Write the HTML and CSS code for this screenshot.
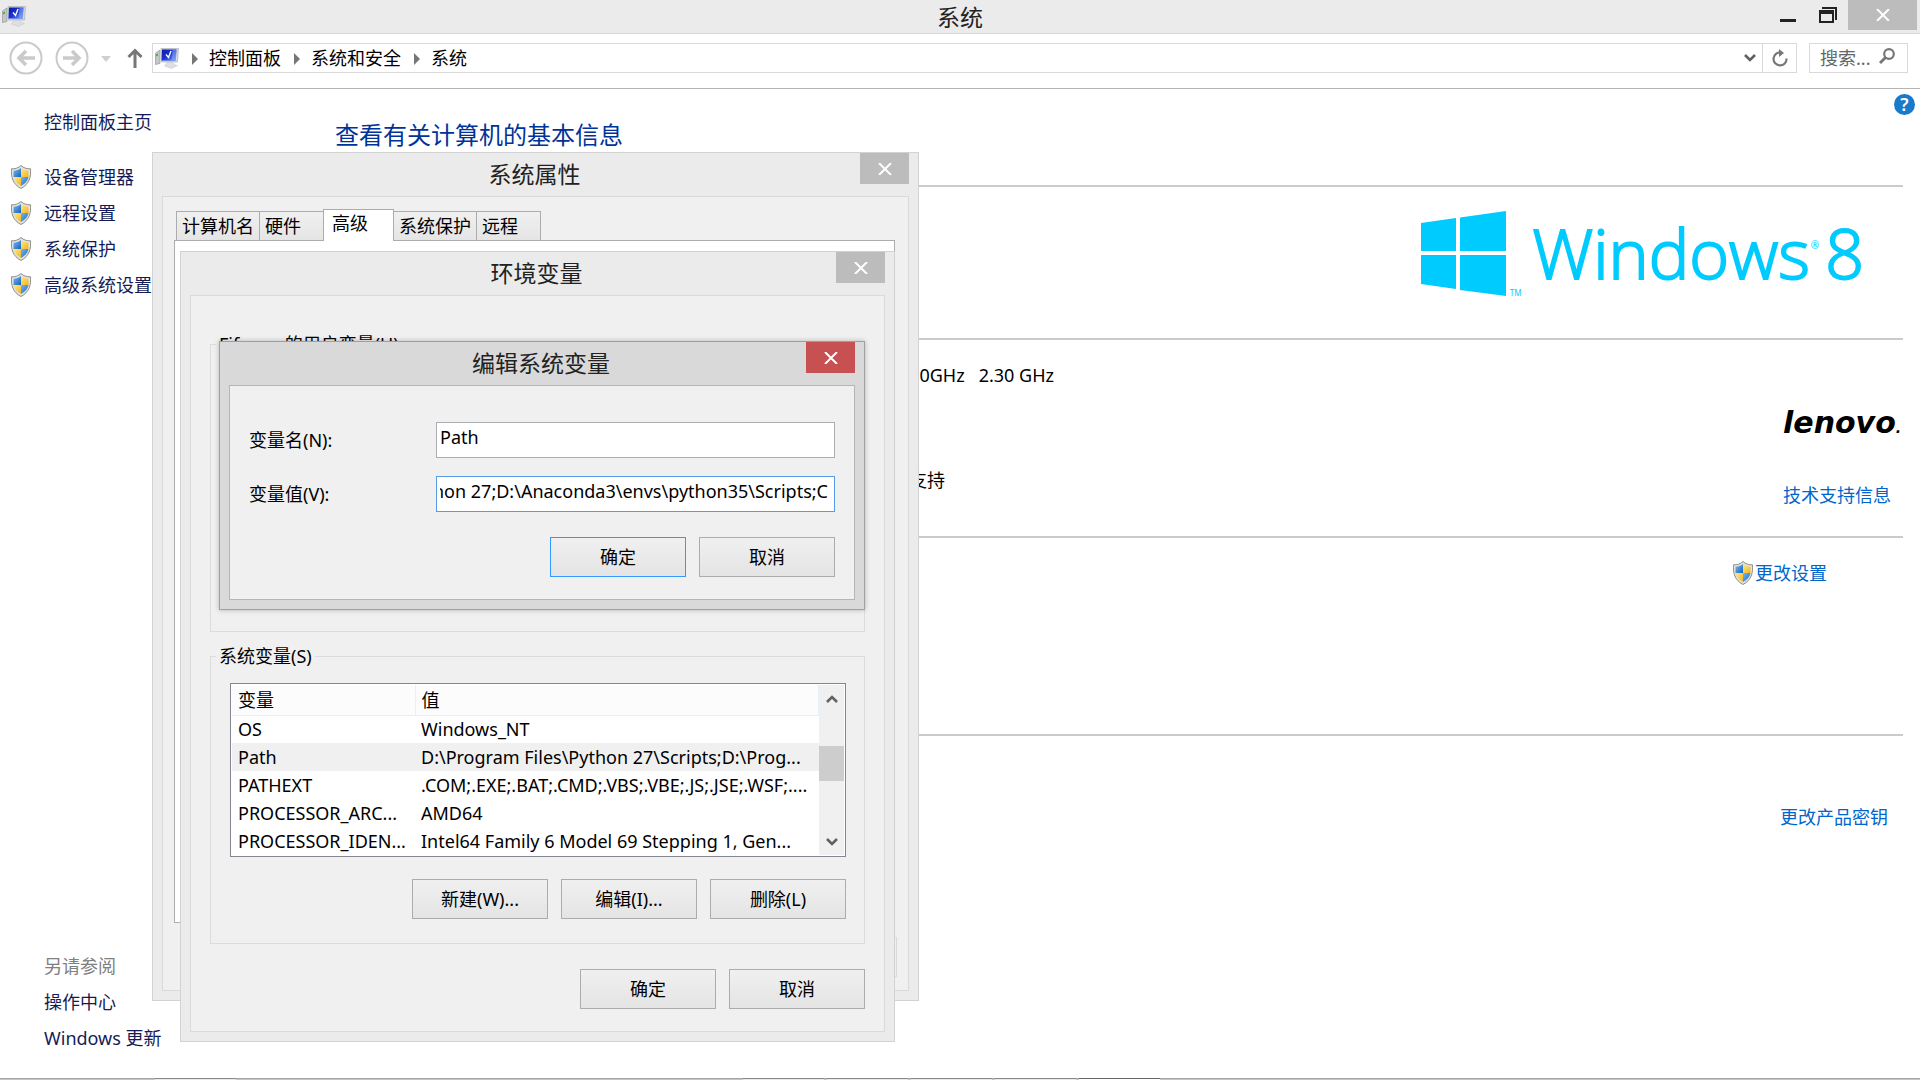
FILE: index.html
```html
<!DOCTYPE html>
<html lang="zh-CN">
<head>
<meta charset="utf-8">
<title>系统</title>
<link rel="stylesheet" href="styles.css">
</head>
<body>
<svg class="defs" aria-hidden="true">
  <defs>
    <linearGradient id="screen" x1="0" y1="0" x2="1" y2="1">
      <stop offset="0" stop-color="#0a1a9c"/><stop offset=".5" stop-color="#1b35d6"/><stop offset="1" stop-color="#8fb4f4"/>
    </linearGradient>
    <linearGradient id="sblue" x1="0" y1="0" x2="1" y2="1">
      <stop offset="0" stop-color="#7db9ee"/><stop offset="1" stop-color="#1262c0"/>
    </linearGradient>
    <linearGradient id="syellow" x1="0" y1="0" x2="1" y2="1">
      <stop offset="0" stop-color="#ffe98a"/><stop offset="1" stop-color="#f0b51c"/>
    </linearGradient>
  </defs>
  <symbol id="pc" viewBox="0 0 24 21">
    <path d="M.5 5l4.500-3v13.500L.5 16.500z" fill="#c4c7ca" stroke="#8a8d92" stroke-width=".6"/>
    <path d="M1 6.500l2-1v2l-2 1z" fill="#3fae3f"/>
    <path d="M6 .5h17.500l-1 13.500L6.500 14z" fill="#d4d8e0" stroke="#a4a8b0" stroke-width=".6"/>
    <path d="M7 1.500h14.500l-.8 11.500L6.500 12.500z" fill="url(#screen)"/>
    <path d="M17.500 1.500h4l-.8 11.500-4-.2z" fill="#7f9ff0" opacity=".6"/>
    <path d="M11 6.500l2.500 3L16 3" fill="none" stroke="#fff" stroke-width="1.400"/>
    <path d="M12 14.500h6l1 2 3.500 1-6 3-7-2.500z" fill="#dcdfe3" stroke="#c2c5ca" stroke-width=".5"/>
  </symbol>
  <symbol id="shield" viewBox="0 0 20 24">
    <path d="M10 .5C12.500 3 16 4 19.500 3.800 20 12 18.500 19 10 23.500 1.500 19 0 12 .5 3.800 4 4 7.500 3 10 .5z" fill="#e3e3e0" stroke="#8c8c88"/>
    <path d="M10 3C7.800 4.800 5.200 5.600 2.500 5.700V12H10z" fill="url(#sblue)"/>
    <path d="M10 3c2.200 1.800 4.800 2.600 7.500 2.700V12H10z" fill="url(#syellow)"/>
    <path d="M2.500 12H10v9C5.500 18.500 3.200 15.500 2.500 12z" fill="url(#syellow)"/>
    <path d="M17.500 12H10v9c4.500-2.500 6.800-5.500 7.500-9z" fill="url(#sblue)"/>
  </symbol>
  <symbol id="close" viewBox="0 0 14 12">
    <path d="M1 0l12 12M13 0L1 12" stroke="#fff" stroke-width="2"/>
  </symbol>
  <symbol id="crumb" viewBox="0 0 6 12"><path d="M0 0l6 6-6 6z" fill="#767676"/></symbol>
  <symbol id="chev" viewBox="0 0 12 10"><path d="M1 2l5 5 5-5" fill="none" stroke="#606060" stroke-width="2.600"/></symbol>
</svg>

<header class="titlebar">
  <svg class="title-icon"><use href="#pc"/></svg>
  <h1 class="title">系统</h1>
  <div class="caption">
    <button class="cap" aria-label="最小化"><svg width="16" height="16"><path d="M0 13.500h16" stroke="#222" stroke-width="3"/></svg></button>
    <button class="cap" aria-label="还原"><svg width="18" height="16"><path d="M3 1h14v12" fill="none" stroke="#222" stroke-width="2"/><path d="M1 5h13v10H1z" fill="none" stroke="#222" stroke-width="2"/><path d="M0 5h15" stroke="#222" stroke-width="4"/></svg></button>
    <button class="cap-close" aria-label="关闭"><svg width="14" height="12"><use href="#close"/></svg></button>
  </div>
</header>

<nav class="toolbar">
  <button class="round" aria-label="后退"><svg width="34" height="34" fill="none" stroke="#cacaca"><circle cx="17" cy="17" r="15.500" stroke-width="2"/><path d="M26 17H10M17 10l-7 7 7 7" stroke-width="3.500"/></svg></button>
  <button class="round" aria-label="前进"><svg width="34" height="34" fill="none" stroke="#cacaca"><circle cx="17" cy="17" r="15.500" stroke-width="2"/><path d="M8 17h16M17 10l7 7-7 7" stroke-width="3.500"/></svg></button>
  <button class="recent" aria-label="最近"><svg width="10" height="6"><path d="M0 0h10L5 6z" fill="#d0d0d0"/></svg></button>
  <button class="up" aria-label="上移"><svg width="16" height="20" fill="none" stroke="#777" stroke-width="3"><path d="M8 20V3M1.500 9L8 2.500 14.500 9"/></svg></button>
  <div class="address">
    <svg class="title-icon"><use href="#pc"/></svg>
    <svg class="crumb"><use href="#crumb"/></svg><a href="#cp">控制面板</a>
    <svg class="crumb"><use href="#crumb"/></svg><a href="#sec">系统和安全</a>
    <svg class="crumb"><use href="#crumb"/></svg><a href="#sys">系统</a>
    <button class="drop" aria-label="展开"><svg width="12" height="10"><use href="#chev"/></svg></button>
    <button class="refresh" aria-label="刷新"><svg width="18" height="18" fill="none" stroke="#777" stroke-width="2.200"><path d="M10 3.500A6.500 6.500 0 1 0 15.500 9.500"/><path d="M8 0l5 4-5 4z" fill="#777" stroke="none"/></svg></button>
  </div>
  <div class="search">
    <input type="text" placeholder="搜索..." aria-label="搜索">
    <svg width="16" height="16" fill="none" stroke="#777"><circle cx="10" cy="6" r="4.800" stroke-width="2.200"/><path d="M6.500 9.500L1 15" stroke-width="2.800"/></svg>
  </div>
</nav>

<div class="body">
  <aside class="side">
    <a class="home" href="#home">控制面板主页</a>
    <ul class="tasks">
      <li><svg class="shield"><use href="#shield"/></svg><a href="#dev">设备管理器</a></li>
      <li><svg class="shield"><use href="#shield"/></svg><a href="#remote">远程设置</a></li>
      <li><svg class="shield"><use href="#shield"/></svg><a href="#protect">系统保护</a></li>
      <li><svg class="shield"><use href="#shield"/></svg><a href="#adv">高级系统设置</a></li>
    </ul>
    <ul class="also">
      <li class="muted">另请参阅</li>
      <li><a href="#action">操作中心</a></li>
      <li><a href="#update">Windows 更新</a></li>
    </ul>
  </aside>
  <main class="main">
    <button class="help" aria-label="帮助">?</button>
    <h2 class="heading">查看有关计算机的基本信息</h2>
    <section class="block edition">
      <svg class="flag" viewBox="0 0 86 86" fill="#00cbff"><path d="M0 12l35-5v33H0zM39 6.500L85 0v40H39zM0 44h35v34l-35-5zM39 44h46v41l-46-6z"/></svg>
      <span class="tm">TM</span>
      <span class="brand">Windows</span><span class="reg">®</span><span class="brand">8</span>
    </section>
    <section class="block specs">
      <div class="info">
        <p class="cpu">2.30GHz &nbsp; 2.30 GHz</p>
        <p class="pen">支持</p>
      </div>
      <div class="vendor">
        <span class="lenovo">lenovo<small>.</small></span>
        <a class="link" href="#support">技术支持信息</a>
      </div>
    </section>
    <section class="block naming">
      <svg class="shield"><use href="#shield"/></svg><a class="link" href="#change">更改设置</a>
    </section>
    <section class="block activation"><a class="link" href="#key">更改产品密钥</a></section>
  </main>
</div>

<div class="taskbar"><i class="first"></i><i></i><i></i><i></i><i></i><i class="current"></i></div>

<div class="dialog props" role="dialog" aria-label="系统属性">
  <div class="dhead"><h2>系统属性</h2><button class="x" aria-label="关闭"><svg width="14" height="12"><use href="#close"/></svg></button></div>
  <div class="client">
    <div class="tabs">
      <button>计算机名</button><button>硬件</button><button class="on">高级</button><button>系统保护</button><button>远程</button>
    </div>
    <div class="panel"></div>
    <button class="btn apply" disabled aria-label="应用"></button>
  </div>
</div>

<div class="dialog env" role="dialog" aria-label="环境变量">
  <div class="dhead"><h2>环境变量</h2><button class="x" aria-label="关闭"><svg width="14" height="12"><use href="#close"/></svg></button></div>
  <div class="client">
    <fieldset class="user"><legend>Fifseon 的用户变量(U)</legend></fieldset>
    <fieldset class="system">
      <legend>系统变量(S)</legend>
      <div class="list">
        <table>
          <thead><tr><th class="c1">变量</th><th>值</th></tr></thead>
          <tbody>
            <tr><td>OS</td><td>Windows_NT</td></tr>
            <tr class="sel"><td>Path</td><td>D:\Program Files\Python 27\Scripts;D:\Prog...</td></tr>
            <tr><td>PATHEXT</td><td>.COM;.EXE;.BAT;.CMD;.VBS;.VBE;.JS;.JSE;.WSF;....</td></tr>
            <tr><td>PROCESSOR_ARC...</td><td>AMD64</td></tr>
            <tr><td>PROCESSOR_IDEN...</td><td>Intel64 Family 6 Model 69 Stepping 1, Gen...</td></tr>
          </tbody>
        </table>
        <div class="scroll">
          <svg class="flip" width="12" height="10"><use href="#chev"/></svg>
          <span class="thumb"></span>
          <svg width="12" height="10"><use href="#chev"/></svg>
        </div>
      </div>
      <div class="row">
        <button class="btn">新建(W)...</button><button class="btn">编辑(I)...</button><button class="btn">删除(L)</button>
      </div>
    </fieldset>
    <div class="row foot"><button class="btn">确定</button><button class="btn">取消</button></div>
  </div>
</div>

<form class="dialog edit" role="dialog" aria-label="编辑系统变量">
  <div class="dhead"><h2>编辑系统变量</h2><button type="button" class="x" aria-label="关闭"><svg width="14" height="12"><use href="#close"/></svg></button></div>
  <div class="client">
    <div class="field"><label for="vn">变量名(N):</label><input id="vn" type="text" value="Path"></div>
    <div class="field"><label for="vv">变量值(V):</label><input id="vv" class="focus" type="text" value="hon 27;D:\Anaconda3\envs\python35\Scripts;C"></div>
    <div class="row"><button type="button" class="btn default">确定</button><button type="button" class="btn">取消</button></div>
  </div>
</form>
</body>
</html>
```
FILE: styles.css
```css
* { box-sizing: border-box; }
body {
  margin: 0;
  min-height: 100vh;
  display: flex;
  flex-direction: column;
  position: relative;
  overflow: hidden;
  background: #fff;
  color: #000;
  font: 400 18px/24px "Noto Sans", "Noto Sans CJK SC", sans-serif;
}
h1, h2, p, ul { margin: 0; padding: 0; list-style: none; font-weight: 400; }
a { color: inherit; text-decoration: none; }
button, input { font: inherit; color: inherit; border: 0; padding: 0; background: none; }
svg { display: block; flex: none; }
.defs { position: absolute; width: 0; height: 0; }

/* Title bar */
.titlebar {
  display: grid;
  grid-template-columns: 1fr auto 1fr;
  align-items: center;
  height: 34px;
  background: #ebebeb;
  border-bottom: 1px solid #d8d8d8;
}
.title-icon { width: 24px; height: 21px; margin-left: 2px; }
.title { font-size: 23px; line-height: 32px; color: #222; }
.caption { display: flex; justify-content: flex-end; align-self: start; padding-right: 3px; }
.cap { display: flex; align-items: center; height: 30px; margin-right: 23px; }
.cap + .cap { margin-right: 11px; }
.cap-close { display: flex; align-items: center; justify-content: center; width: 69px; height: 30px; background: #bcbcbc; }

/* Navigation bar */
.toolbar { display: flex; align-items: center; height: 55px; padding: 0 12px 6px 9px; border-bottom: 1px solid #b4b4b4; }
.round { margin-right: 12px; }
.recent { margin: 2px 16px 0 0; }
.up { margin-right: 9px; }
.address { display: flex; align-items: center; flex: 1; height: 30px; border: 1px solid #d9d9d9; }
.crumb { width: 6px; height: 12px; margin: 1px 11px 0 13px; }
.drop { margin: 0 6px 0 auto; }
.refresh { display: flex; align-items: center; justify-content: center; width: 34px; height: 28px; border-left: 1px solid #d9d9d9; }
.search { display: flex; align-items: center; width: 99px; height: 30px; margin-left: 12px; padding: 0 12px 0 10px; border: 1px solid #d9d9d9; }
.search input { flex: 1; min-width: 0; color: #666; outline: 0; }
.search input::placeholder { color: #666; opacity: 1; }
.search svg { margin-bottom: 4px; }

/* Page body */
.body { display: flex; flex: 1; }
.side { display: flex; flex-direction: column; width: 335px; padding: 21px 0 22px 11px; color: #151c55; }
.home { padding-left: 33px; }
.tasks { margin-top: 25px; }
.tasks li { display: flex; align-items: center; gap: 13px; height: 36px; }
.shield { width: 20px; height: 24px; }
.also { margin-top: auto; padding-left: 33px; line-height: 36px; }
.muted { color: #808080; }
.main { flex: 1; min-width: 0; padding-right: 17px; position: relative; }
.help { position: absolute; right: 5px; top: 5px; width: 21px; height: 21px; border-radius: 50%; background: #1979ca; color: #fff; font-size: 18px; font-weight: 600; line-height: 21px; }
.heading { padding: 28px 0 32px; font-size: 24px; line-height: 36px; color: #003399; }
.block { display: flex; border-top: 2px solid #cbcbcb; }
.edition { height: 153px; justify-content: flex-end; align-items: flex-start; padding: 24px 39px 0 0; color: #00cbff; }
.flag { width: 86px; height: 86px; }
.tm { margin: 78px 11px 0 3px; font-size: 8px; line-height: 8px; }
.brand { font: 300 68px/84px "Open Sans", sans-serif; -webkit-text-stroke: 2px #00cbff; }
.reg { margin: 28px 6px 0 1px; font-size: 10px; line-height: 12px; }
.specs { height: 198px; justify-content: space-between; padding-top: 23px; }
.info { padding-left: 559px; }
.pen { padding: 81px 0 0 15px; }
.vendor { width: 120px; padding-top: 48px; }
.lenovo { display: block; font: italic 700 30px/24px "DejaVu Sans", sans-serif; }
.lenovo small { font-size: 14px; }
.vendor .link { display: block; margin-top: 43px; }
.naming { height: 198px; justify-content: flex-end; gap: 2px; padding: 23px 76px 0 0; }
.activation { justify-content: flex-end; padding: 69px 15px 0 0; }
.link { color: #0066cc; }

/* Sliver of the taskbar */
.taskbar { display: flex; gap: 3px; height: 2px; padding-left: 155px; background: linear-gradient(#a6a6a6 50%, #c4c4c4 50%); }
.taskbar i { width: 81px; background: linear-gradient(#888 50%, #eaeaea 50%); }
.taskbar .first { margin-right: 504px; }
.taskbar .current { background: linear-gradient(#666 50%, #fff 50%); }

/* Dialog windows */
.dialog { position: absolute; display: flex; flex-direction: column; padding: 0 9px 9px; background: #ebebeb; border: 1px solid #d2d2d2; }
.dhead { display: flex; align-items: flex-start; height: 43px; }
.dhead h2 { flex: 1; padding: 3px 0 0 47px; font-size: 23px; line-height: 36px; text-align: center; color: #222; }
.x { display: flex; align-items: center; justify-content: center; width: 49px; height: 31px; background: #bcbcbc; }
.client { flex: 1; background: #f0f0f0; border: 1px solid #dadada; }
.props { left: 152px; top: 152px; width: 767px; height: 849px; }
.env { left: 180px; top: 251px; width: 715px; height: 791px; }
.edit { left: 219px; top: 341px; width: 646px; height: 269px; background: #d9d9d9; border-color: #9f9f9f; box-shadow: 0 0 5px rgba(0, 0, 0, .25); }
.edit .client { border-color: #b5b5b5; }
.edit .x { background: #c75050; }

.btn { width: 136px; height: 40px; border: 1px solid #acacac; background: linear-gradient(#f0f0f0, #e4e4e4); }
.default { border-color: #3399ff; }
.row { display: flex; justify-content: flex-end; gap: 13px; }

/* System properties */
.props .client { padding: 12px 13px 0 11px; }
.tabs { display: flex; align-items: flex-end; padding-left: 2px; position: relative; }
.tabs button { min-width: 65px; height: 29px; padding: 0 5px; text-align: left; border: 1px solid #acacac; border-bottom: 0; background: linear-gradient(#f0f0f0, #e5e5e5); }
.tabs button + button { margin-left: -1px; }
.tabs .on { width: 71px; height: 32px; margin-bottom: -1px; padding: 0 8px 6px; background: #fff; z-index: 1; }
.panel { height: 683px; border: 1px solid #acacac; background: #fff; }
.apply { display: block; margin: 14px -2px 0 auto; border-color: #d9d9d9; background: #efefef; }

/* Environment variables */
.env .client { padding: 36px 19px 0; }
fieldset { margin: 0; min-width: 0; border: 1px solid #dcdcdc; padding: 0 18px 24px 19px; }
legend { margin-left: -14px; padding: 0 3px; }
.user { height: 300px; }
.system { height: 300px; margin-top: 12px; }
.list { display: flex; height: 174px; margin-top: 15px; padding: 1px; background: #fff; border: 1px solid #828790; }
table { flex: 1; table-layout: fixed; border-collapse: collapse; }
th, td { height: 28px; padding: 0 0 0 6px; text-align: left; font-weight: 400; white-space: nowrap; overflow: hidden; }
th { height: 30px; background: #fcfcfc; border-bottom: 1px solid #e5f0fa; border-right: 1px solid #e5f0fa; }
.c1 { width: 183px; }
.sel { background: #f0f0f0; }
.scroll { display: flex; flex-direction: column; align-items: center; width: 25px; padding: 9px 0 8px; background: #f0f0f0; }
.flip { transform: scaleY(-1); }
.thumb { width: 25px; height: 35px; margin: 42px 0 auto; background: #cdcdcd; }
.list + .row { margin-top: 22px; }
.foot { margin-top: 25px; }

/* Edit variable */
.edit .client { padding: 36px 19px 0; }
.field { display: flex; align-items: center; margin-bottom: 18px; }
.field label { width: 187px; }
.field input { flex: 1; min-width: 0; height: 36px; padding: 0 3px 6px; background: #fff; border: 1px solid #abadb3; outline: 0; }
.field .focus { border-color: #569de5; text-indent: -7px; }
.edit .row { padding-top: 7px; }
```
